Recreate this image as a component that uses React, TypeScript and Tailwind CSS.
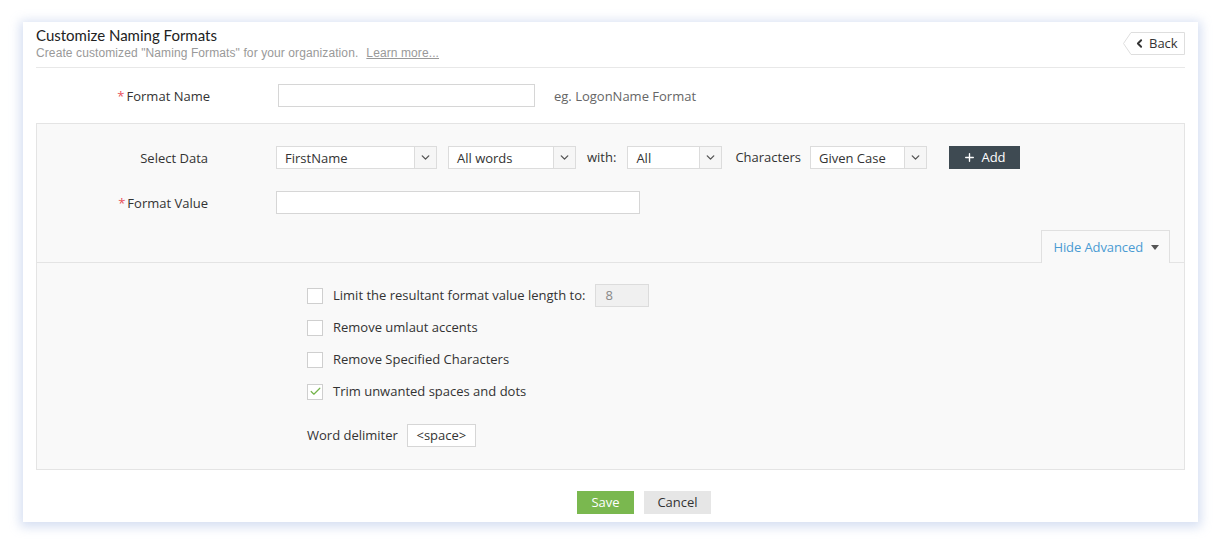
import { ChevronDown, ChevronLeft, Plus, Check } from 'lucide-react';

const body = "font-['Open_Sans',Arial,sans-serif]";

function Select({ value, width }: { value: string; width: string }) {
    return (
        <div className={`flex h-[23px] ${width} border border-[#dcdcdc] bg-white`}>
            <span className="flex-1 pl-[8px] text-[13px] leading-[22px] text-[#333]">{value}</span>
            <span className="flex w-[22px] items-center justify-center border-l border-[#dcdcdc] bg-[#f6f6f6]">
                <ChevronDown size={13} strokeWidth={2.5} className="text-[#555]" />
            </span>
        </div>
    );
}

function CheckRow({ label, checked, children }: { label: string; checked?: boolean; children?: React.ReactNode }) {
    return (
        <div className="flex h-[23px] items-center">
            <span className="flex h-[16px] w-[16px] items-center justify-center border border-[#cfcfcf] bg-white">
                {checked && <Check size={13} strokeWidth={2.2} color="#74b44a" />}
            </span>
            <span className="ml-[10px] text-[13px] text-[#333]">{label}</span>
            {children}
        </div>
    );
}

export default function App() {
    return (
        <div className={`min-h-screen bg-white pl-[23px] pt-[22px] ${body}`}>
            <div className="w-[1175px] bg-white px-[13px] pt-[3px] pb-[8px] shadow-[0_2px_10px_3px_rgba(200,212,238,0.75)]">
                {/* header */}
                <div className="flex items-start justify-between border-b border-[#e8e8e8] pb-[7px]">
                    <div>
                        <h1 className="font-['Lato',sans-serif] text-[15px] leading-[20px] text-[#222]">Customize Naming Formats</h1>
                        <p className="mt-[1px] font-['Liberation_Sans',Arial,sans-serif] text-[12px] leading-[14px] tracking-[0.1px] text-[#999]">
                            Create customized "Naming Formats" for your organization.
                            <span className="ml-[8px] underline">Learn more...</span>
                        </p>
                    </div>
                    <div className="relative mt-[7px] flex h-[23px] w-[62px] items-center">
                        <svg className="absolute inset-0" width="62" height="23" viewBox="0 0 62 23">
                            <polygon points="8,0.5 61.5,0.5 61.5,22.5 8,22.5 0.5,11.5" fill="#fff" stroke="#dedede" />
                        </svg>
                        <span className="relative ml-[10px] flex items-center text-[13px] text-[#333]">
                            <ChevronLeft size={13} strokeWidth={3.5} className="text-[#333]" />
                            <span className="ml-[3px]">Back</span>
                        </span>
                    </div>
                </div>

                {/* format name */}
                <div className="mt-[16px] flex h-[23px] items-center">
                    <label className="w-[174px] pt-[3px] text-right text-[13px] text-[#333]">
                        <span className="mr-[2px] text-[#e8505b]">*</span>Format Name
                    </label>
                    <input className="ml-[68px] h-[23px] w-[257px] border border-[#d6d6d6] bg-white outline-none" />
                    <span className="ml-[19px] pt-[2px] text-[13px] text-[#666]">eg. LogonName Format</span>
                </div>

                {/* data panel */}
                <div className="mt-[16px] border border-[#e4e4e4] bg-[#f9f9f9]">
                    <div className="border-b border-[#e4e4e4] pt-[22px]">
                        <div className="flex h-[23px] items-center">
                            <label className="w-[171px] pt-[3px] text-right text-[13px] text-[#333]">Select Data</label>
                            <div className="ml-[68px] flex items-center gap-[11px] text-[13px] text-[#333]">
                                <Select value="FirstName" width="w-[161px]" />
                                <Select value="All words" width="w-[128px]" />
                                <span>with:</span>
                                <Select value="All" width="w-[95px]" />
                                <span className="ml-[2px] mr-[-2px]">Characters</span>
                                <Select value="Given Case" width="w-[117px]" />
                                <button className="ml-[11px] flex h-[23px] w-[71px] items-center justify-center gap-[5px] bg-[#3e4a52] text-[13px] text-white">
                                    <Plus size={13} strokeWidth={2.5} />
                                    Add
                                </button>
                            </div>
                        </div>
                        <div className="mt-[22px] flex h-[23px] items-center">
                            <label className="w-[171px] pt-[3px] text-right text-[13px] text-[#333]">
                                <span className="mr-[2px] text-[#e8505b]">*</span>Format Value
                            </label>
                            <input className="ml-[68px] h-[23px] w-[364px] border border-[#d6d6d6] bg-white outline-none" />
                        </div>
                        <div className="mt-[16px] flex justify-end pr-[14px]">
                            <div className="-mb-px flex h-[33px] items-center border border-b-0 border-[#e0e0e0] bg-[#f9f9f9] pl-[11px] pr-[10px] pt-[1px] text-[13px] tracking-[-0.1px] text-[#4a9bd3]">
                                Hide Advanced
                                <svg className="ml-[8px]" width="8" height="5" viewBox="0 0 8 5">
                                    <polygon points="0,0 8,0 4,5" fill="#555" />
                                </svg>
                            </div>
                        </div>
                    </div>

                    {/* advanced */}
                    <div className="pl-[270px] pt-[21px] pb-[22px]">
                        <div className="flex flex-col gap-[9px]">
                            <CheckRow label="Limit the resultant format value length to:">
                                <span className="ml-[10px] flex h-[23px] w-[54px] items-center border border-[#dcdcdc] bg-[#f0f0f0] pl-[9px] text-[13px] text-[#888]">8</span>
                            </CheckRow>
                            <CheckRow label="Remove umlaut accents" />
                            <CheckRow label="Remove Specified Characters" />
                            <CheckRow label="Trim unwanted spaces and dots" checked />
                        </div>
                        <div className="mt-[21px] flex h-[23px] items-center text-[13px] text-[#333]">
                            <span>Word delimiter</span>
                            <span className="ml-[9px] flex h-[23px] w-[69px] items-center justify-center border border-[#d6d6d6] bg-white">&lt;space&gt;</span>
                        </div>
                    </div>
                </div>

                {/* footer */}
                <div className="mt-[21px] flex gap-[10px] pl-[541px]">
                    <button className="h-[23px] w-[57px] bg-[#7ab84f] text-[13px] text-white">Save</button>
                    <button className="h-[23px] w-[67px] bg-[#e6e6e6] text-[13px] text-[#333]">Cancel</button>
                </div>
            </div>
        </div>
    );
}
